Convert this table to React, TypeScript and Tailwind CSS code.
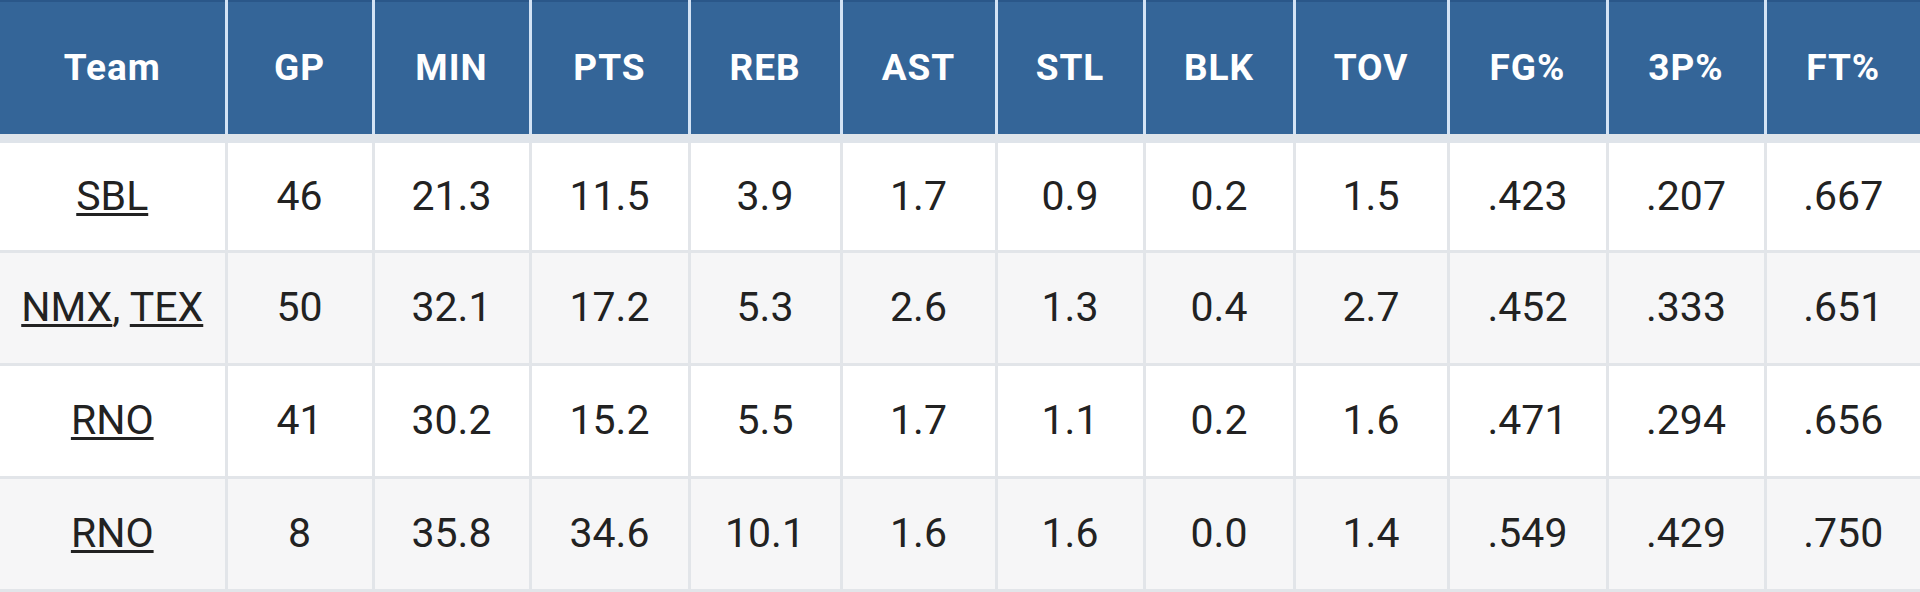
import React from "react";

const headers = ["Team", "GP", "MIN", "PTS", "REB", "AST", "STL", "BLK", "TOV", "FG%", "3P%", "FT%"];
const widths = [226, 147, 157, 159, 152, 155, 148, 150, 154, 159, 158, 155];

type Row = { teams: string[]; vals: string[] };
const rows: Row[] = [
  { teams: ["SBL"], vals: ["46", "21.3", "11.5", "3.9", "1.7", "0.9", "0.2", "1.5", ".423", ".207", ".667"] },
  { teams: ["NMX", "TEX"], vals: ["50", "32.1", "17.2", "5.3", "2.6", "1.3", "0.4", "2.7", ".452", ".333", ".651"] },
  { teams: ["RNO"], vals: ["41", "30.2", "15.2", "5.5", "1.7", "1.1", "0.2", "1.6", ".471", ".294", ".656"] },
  { teams: ["RNO"], vals: ["8", "35.8", "34.6", "10.1", "1.6", "1.6", "0.0", "1.4", ".549", ".429", ".750"] },
];

export default function App() {
  return (
    <div className="w-[1920px] h-[592px] overflow-hidden bg-white font-['Roboto',sans-serif]">
      <table className="w-[1920px] table-fixed border-collapse">
        <colgroup>
          {widths.map((w, i) => (
            <col key={i} style={{ width: w }} />
          ))}
        </colgroup>
        <thead>
          <tr className="h-[137px] bg-[#346598] border-t-2 border-t-[#2a5789] border-b-[9px] border-b-[#dfe4ea]">
            {headers.map((h, i) => (
              <th
                key={h}
                className={
                  "p-0 text-center align-middle text-[37px] tracking-[1px] font-bold text-white leading-none " +
                  (i > 0 ? "border-l-[3px] border-l-[#d3e3f5]" : "")
                }
              >
                {h}
              </th>
            ))}
          </tr>
        </thead>
        <tbody>
          {rows.map((r, ri) => (
            <tr
              key={ri}
              className={
                "h-[113px] border-b-[3px] border-b-[#e2e5e9] " + (ri % 2 === 1 ? "bg-[#f6f6f7]" : "bg-white")
              }
            >
              <td className="p-0 text-center align-middle text-[41px] text-[#222222] leading-none">
                {r.teams.map((t, ti) => (
                  <React.Fragment key={ti}>
                    {ti > 0 && ", "}
                    <span className="underline decoration-[3px] underline-offset-[3px]">{t}</span>
                  </React.Fragment>
                ))}
              </td>
              {r.vals.map((v, vi) => (
                <td
                  key={vi}
                  className="p-0 text-center align-middle text-[41px] text-[#222222] leading-none border-l-[3px] border-l-[#e2e5e9]"
                >
                  {v}
                </td>
              ))}
            </tr>
          ))}
        </tbody>
      </table>
    </div>
  );
}
